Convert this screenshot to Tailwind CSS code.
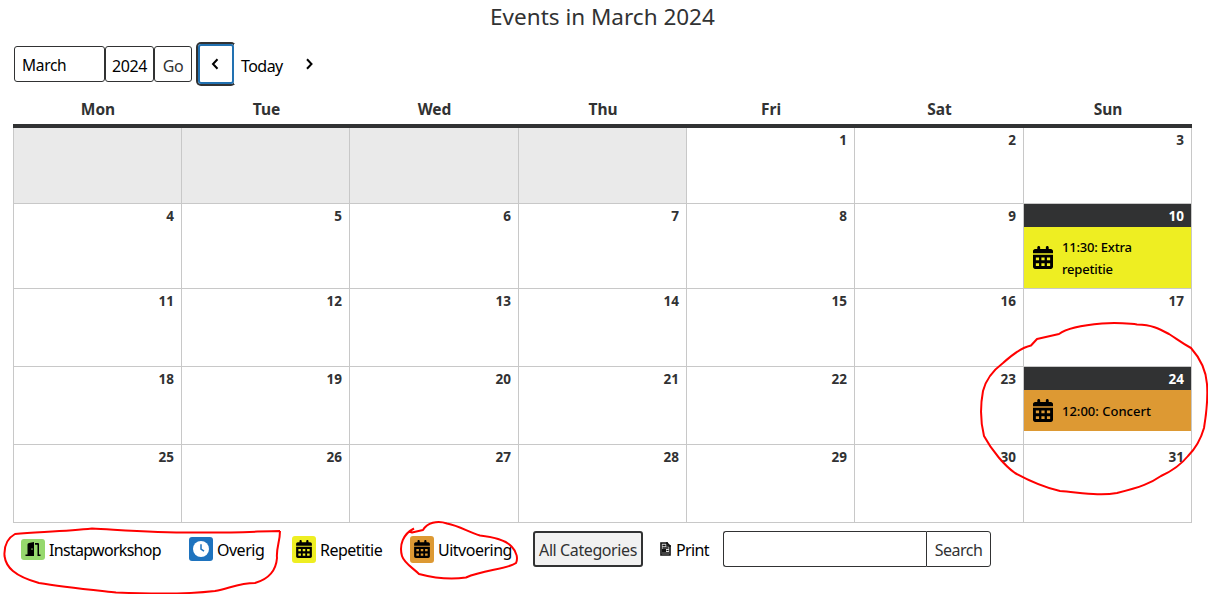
<!DOCTYPE html>
<html lang="nl">
<head>
    <meta charset="UTF-8">
    <meta name="viewport" content="width=device-width, initial-scale=1.0">
    <title>Events in March 2024</title>
    <script src="https://cdn.jsdelivr.net/npm/@tailwindcss/browser@4"></script>
</head>
<body class="relative bg-white text-[#313233] font-['Noto_Sans',sans-serif] w-[1208px] h-[594px] overflow-hidden">

    <!-- shared icons -->
    <svg class="hidden">
        <symbol id="calendar" viewBox="0 0 448 512">
            <path fill-rule="evenodd" d="M128 0c18 0 32 14 32 32v32h128V32c0-18 14-32 32-32s32 14 32 32v32h48c26 0 48 22 48 48v48H0v-48c0-26 22-48 48-48h48V32c0-18 14-32 32-32zM0 192h448v272c0 26-22 48-48 48H48c-26 0-48-22-48-48V192zM64 256v64h72v-64H64zM188 256v64h72v-64h-72zM312 256v64h72v-64h-72zM64 384v64h72v-64H64zM188 384v64h72v-64h-72zM312 384v64h72v-64h-72z"/>
        </symbol>
    </svg>

    <main class="pl-[13px] w-[1192px]">
        <h2 class="h-[42px] pt-px text-center text-[22.5px] leading-8">Events in March 2024</h2>

        <!-- date navigation -->
        <div class="flex items-center h-11 pl-px text-base leading-none text-black tracking-[-0.4px]">
            <div class="flex items-center w-[91px] h-9 pt-[3px] pl-[7px] border border-[#313233] rounded-[3px] text-[15.5px] tracking-[-0.3px]">March</div>
            <div class="flex items-center justify-center w-[49px] h-9 pt-[3px] border border-[#313233] rounded-[3px]">2024</div>
            <button class="w-[38px] h-9 pt-[3px] border border-[#313233] rounded-[3px] text-[#313233]">Go</button>
            <button class="flex items-center justify-center w-9 h-10 ml-1.5 pr-0.5 border-2 border-[#2271b1] rounded-[3px] ring-2 ring-[#313233]">
                <svg class="w-2 h-3" viewBox="0 0 8 12" fill="none" stroke="currentColor" stroke-width="2"><path d="M6.5 1.2 2 6l4.5 4.8"/></svg>
            </button>
            <button class="relative flex items-center h-10 pt-[3px] pl-[7px] w-[71px] bg-white tracking-[-0.55px]">Today</button>
            <svg class="w-2 h-3" viewBox="0 0 8 12" fill="none" stroke="currentColor" stroke-width="2"><path d="M2 1.2 6.5 6 2 10.8"/></svg>
        </div>

        <!-- weekday names -->
        <div class="grid grid-cols-[170px_167px_169px_168px_168px_169px_168px] h-[42px] border-b-4 border-[#313233] text-center text-[15.5px] font-bold leading-[46px]">
            <div>Mon</div><div>Tue</div><div>Wed</div><div>Thu</div><div>Fri</div><div>Sat</div><div>Sun</div>
        </div>

        <!-- days -->
        <div class="grid grid-cols-[168px_168px_169px_168px_168px_169px_168px] grid-rows-[76px_85px_78px_78px_78px] border-l border-[#c8c8c8] text-right text-[13.5px] font-bold leading-[24px] [&>div]:border-r [&>div]:border-b [&>div]:border-[#c8c8c8] [&>div]:pr-[7px]">
            <div class="bg-[#eaeaea]"></div><div class="bg-[#eaeaea]"></div><div class="bg-[#eaeaea]"></div><div class="bg-[#eaeaea]"></div>
            <div>1</div><div>2</div><div>3</div>

            <div>4</div><div>5</div><div>6</div><div>7</div><div>8</div><div>9</div>
            <div class="pr-0!">
                <div class="h-[23px] pr-[7px] bg-[#313233] text-white">10</div>
                <div class="flex items-center h-[61px] pl-[9px] bg-[#eeee22] text-left text-black text-[13px] font-medium leading-[22px] tracking-[-0.2px]">
                    <svg class="w-5 h-[23px] mr-[9px] shrink-0"><use href="#calendar"/></svg>
                    <span class="w-24">11:30: Extra repetitie</span>
                </div>
            </div>

            <div>11</div><div>12</div><div>13</div><div>14</div><div>15</div><div>16</div><div>17</div>

            <div>18</div><div>19</div><div>20</div><div>21</div><div>22</div><div>23</div>
            <div class="pr-0!">
                <div class="h-[23px] pr-[7px] bg-[#313233] text-white">24</div>
                <div class="flex items-center h-[41px] pl-[9px] bg-[#dd9933] text-left text-black text-[13px] font-medium leading-[22px]">
                    <svg class="w-5 h-[23px] mr-[9px] shrink-0"><use href="#calendar"/></svg>
                    <span>12:00: Concert</span>
                </div>
            </div>

            <div>25</div><div>26</div><div>27</div><div>28</div><div>29</div><div>30</div><div>31</div>
        </div>

        <!-- categories, print and search -->
        <div class="flex items-center h-[52px] pl-2 text-base leading-none text-black tracking-[-0.5px]">
            <div class="flex items-center w-[168px]">
                <span class="flex items-center justify-center w-6 h-[21px] mr-1 rounded-[3px] bg-[#96d86d]">
                    <svg class="w-4 h-[14px]" viewBox="0 0 16 14"><path fill-rule="evenodd" d="M2.500 2.500Q2.500 1.200 4 1L9 0v14H.5v-1.500h2zM6.500 6.200v1.800h1V6.200z"/><path d="M10 1h3q1 0 1 1v10.500h1.500V14h-3V2.800H10z"/></svg>
                </span>
                <span class="pt-0.5 tracking-[-0.7px]">Instapworkshop</span>
            </div>
            <div class="flex items-center w-[103px]">
                <span class="flex items-center justify-center w-6 h-6 mr-1 rounded-[3px] bg-[#1e73be]">
                    <svg class="w-4 h-4" viewBox="0 0 16 16"><circle cx="8" cy="8" r="8" fill="#fff"/><path d="M8 3.200V8l3 2.200" fill="none" stroke="#1e73be" stroke-width="1.500"/></svg>
                </span>
                <span class="pt-0.5">Overig</span>
            </div>
            <div class="flex items-center w-[118px]">
                <span class="flex items-center justify-center w-6 h-[27px] mr-1 rounded-[3px] bg-[#eeee22]"><svg class="w-4 h-[18px]"><use href="#calendar"/></svg></span>
                <span class="pt-0.5">Repetitie</span>
            </div>
            <div class="flex items-center w-[123px]">
                <span class="flex items-center justify-center w-6 h-[27px] mr-1 rounded-[3px] bg-[#dd9933]"><svg class="w-4 h-[18px]"><use href="#calendar"/></svg></span>
                <span class="pt-0.5">Uitvoering</span>
            </div>
            <button class="w-[110px] h-9 pt-0.5 border-2 border-[#313233] rounded-[3px] bg-[#f1f1f1] text-[#313233] tracking-[-0.4px] whitespace-nowrap">All Categories</button>
            <div class="flex items-center w-[80px] pl-[17px]">
                <svg class="w-[11px] h-[14px] mr-[5px]" viewBox="0 0 11 14"><path d="M1 1h6l3 3v9H1z" fill="#ddd" stroke="#111" stroke-width="1.600"/><path d="M7 0v4h4M2.500 3.500h3M2.500 6h6M2 11h7" fill="none" stroke="#111" stroke-width="1.500"/><path d="M2 7h4v3H2z" fill="#111"/><path d="M6.500 8.500h2" stroke="#111"/></svg>
                <span class="pt-0.5 tracking-[-0.65px]">Print</span>
            </div>
            <input type="text" aria-label="Search" class="w-[203px] h-9 border border-r-0 border-[#313233] rounded-l-[3px]">
            <button class="w-[65px] h-9 pt-0.5 border border-[#313233] rounded-r-[3px] text-[#313233]">Search</button>
        </div>
    </main>

    <!-- red pen marks -->
    <svg class="absolute top-0 left-0 pointer-events-none" width="1208" height="594" fill="none" stroke="#ff0000" stroke-width="2" stroke-linejoin="round">
        <path d="M1031 345.500 1037 339 1059 334C1067 328 1084 325 1102 323.500C1118 322 1122 323 1137 324.500C1152 325 1158 328 1169 334C1177 339 1180 342 1191 348C1199 357 1206 370 1207 384C1208 398 1207 410 1204 428C1200 442 1195 449 1188 456C1180 466 1172 471 1161 476C1151 483 1141 487 1117 493C1100 496 1084 493 1060 491C1043 487 1026 479 1015 473C1005 466 992 451 984 436C981 424 980 407 983 391C986 379 995 369 1003 363C1013 354 1023 347 1031 345.500Z"/>
        <path d="M280 531C263 531 236 533 199 532.500C160 533 122 530 92 528.500C68 531 42 532 15 534C6 539 4 548 4.500 556C6 567 14 576 39 583C62 587 93 590 116 592.500C151 594 190 594 215 591C230 588 240 583 255 583C269 579 276 571 277 558C276 548 280 542 280 531"/>
        <path d="M414 528.500 409 531.500 412 532.500 423 530C427 523 437 520 447 523.500C460 526 468 532 480 535.500C494 537 507 541 512 547C517 552 518 559 516 563C508 569 483 570 466 577.500C450 580 434 578 419 574C413 568 404 563 402 556C399 545 403 534 414 528.500"/>
    </svg>
</body>
</html>
